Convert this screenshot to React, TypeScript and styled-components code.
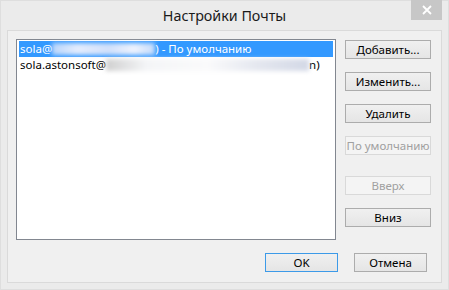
import React from 'react';
import styled, { createGlobalStyle } from 'styled-components';

const GlobalStyle = createGlobalStyle`
  html, body {
    margin: 0;
    padding: 0;
    background: #ebebeb;
  }
  body {
    font-family: "Noto Sans", "Open Sans", "Liberation Sans", sans-serif;
    font-size: 11.5px;
    color: #000;
  }
`;

const accounts = [
  { id: 1, head: 'sola@', blurWidth: 103, tail: ') - По умолчанию' },
  { id: 2, head: 'sola.astonsoft@', blurWidth: 203, tail: 'n)' },
];

export default function App() {
  return (
    <>
      <GlobalStyle />
      <Window>
        <TitleBar>
          <span />
          <Title>Настройки Почты</Title>
          <CloseButton aria-label="Закрыть">
            <svg width="10" height="10" viewBox="0 0 10 10">
              <path d="M1 1 L9 9 M9 1 L1 9" stroke="#fff" strokeWidth="1.8" />
            </svg>
          </CloseButton>
        </TitleBar>
        <Client>
          <Main>
            <AccountList>
              {accounts.map((a, i) => (
                <Row key={a.id} selected={i === 0}>
                  {a.head}
                  <Smudge selected={i === 0} style={{ width: a.blurWidth }} />
                  {a.tail}
                </Row>
              ))}
            </AccountList>
            <SideButtons>
              <Button>Добавить...</Button>
              <Button>Изменить...</Button>
              <Button>Удалить</Button>
              <Button disabled>По умолчанию</Button>
              <Button disabled spaced>Вверх</Button>
              <Button>Вниз</Button>
            </SideButtons>
          </Main>
          <Footer>
            <Button primary wide>OK</Button>
            <Button wide>Отмена</Button>
          </Footer>
        </Client>
      </Window>
    </>
  );
}

const Window = styled.div`
  width: 449px;
  height: 290px;
  box-sizing: border-box;
  border: 1px solid #dedede;
  background: #ebebeb;
  display: flex;
  flex-direction: column;
`;

const TitleBar = styled.div`
  height: 29px;
  display: grid;
  grid-template-columns: 1fr auto 1fr;
  align-items: start;
`;

const Title = styled.div`
  font-size: 14.3px;
  line-height: 15px;
  padding-top: 7px;
  color: #1a1a1a;
`;

const CloseButton = styled.div`
  justify-self: end;
  margin-right: 6px;
  margin-top: -1px;
  width: 31px;
  height: 20px;
  background: #c7c7c7;
  display: flex;
  align-items: center;
  justify-content: center;
`;

const Client = styled.div`
  flex: 1;
  margin: 0 6px 6px 6px;
  border: 1px solid #dadada;
  background: #f0f0f0;
  padding: 8px 9px 10px 8px;
  display: flex;
  flex-direction: column;
`;

const Main = styled.div`
  display: flex;
  gap: 9px;
`;

const AccountList = styled.div`
  width: 320px;
  height: 201px;
  box-sizing: border-box;
  border: 1px solid #828790;
  background: #fff;
  padding: 1px 2px;
`;

const Row = styled.div<{ selected?: boolean }>`
  height: 16px;
  line-height: 16px;
  padding-left: 1px;
  white-space: nowrap;
  display: flex;
  align-items: center;
  background: ${({ selected }) => (selected ? '#3399ff' : 'transparent')};
  color: ${({ selected }) => (selected ? '#fff' : '#000')};
`;

const Smudge = styled.span<{ selected?: boolean }>`
  display: inline-block;
  height: 12px;
  filter: blur(2px);
  background: ${({ selected }) =>
    selected
      ? 'linear-gradient(90deg, #b9d5fb, #e4ecfd 25%, #d2e0fb 55%, #eef2fd 80%, #c3dafb)'
      : 'linear-gradient(90deg, #d0d0d0, #f4f5f7 20%, #fafafb 50%, #e4e7ef 75%, #d3d8e6)'};
`;

const SideButtons = styled.div`
  display: flex;
  flex-direction: column;
  gap: 13px;
  padding-top: 1px;
`;

const Button = styled.button<{ primary?: boolean; wide?: boolean; spaced?: boolean }>`
  width: ${({ wide }) => (wide ? '73px' : '86px')};
  height: 19px;
  margin-top: ${({ spaced }) => (spaced ? '8px' : '0')};
  padding: 0;
  box-sizing: border-box;
  white-space: nowrap;
  overflow: hidden;
  font-family: inherit;
  font-size: 11.5px;
  line-height: 15px;
  color: #000;
  border: 1px solid ${({ primary }) => (primary ? '#3c9ae8' : '#acacac')};
  background: linear-gradient(#f0f0f0, #e5e5e5);
  &:disabled {
    color: #a0a0a0;
    border-color: #d9d9d9;
    background: #f4f4f4;
  }
`;

const Footer = styled.div`
  margin-top: auto;
  display: flex;
  justify-content: flex-end;
  gap: 16px;
  padding-right: 5px;
`;
